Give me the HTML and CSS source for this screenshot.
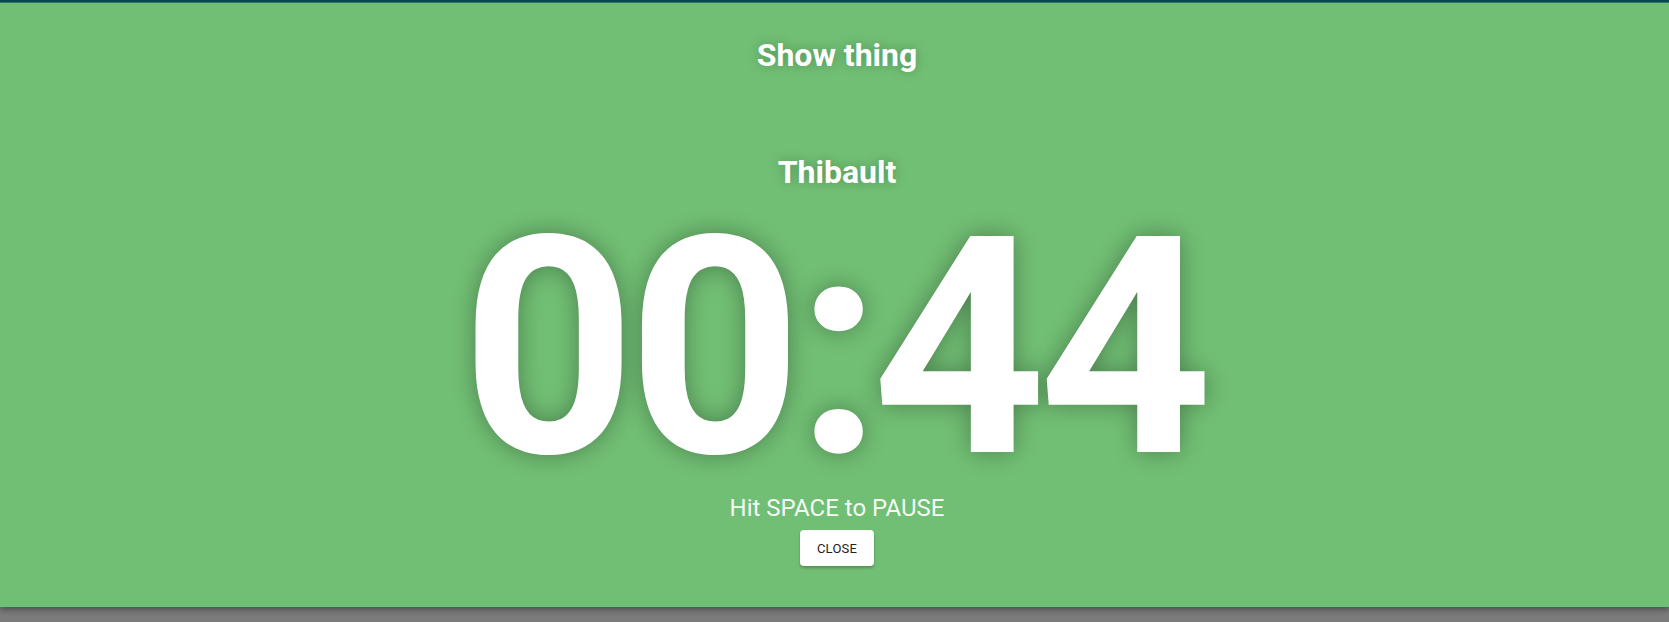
FILE: index.html
```html
<!DOCTYPE html>
<html lang="en">
<head>
<meta charset="utf-8">
<title>Show thing</title>
<link rel="stylesheet" href="styles.css">
</head>
<body>
<div class="topbar"></div>
<main class="panel">
  <div class="content">
    <h1 class="title">Show thing</h1>
    <h2 class="name">Thibault</h2>
    <div class="timer">00<span class="colon">:</span>44</div>
    <p class="hint">Hit SPACE to PAUSE</p>
    <button class="close-btn" type="button">CLOSE</button>
  </div>
</main>
<div class="below"></div>
</body>
</html>
```
FILE: styles.css
```css
html, body {
  margin: 0;
  padding: 0;
}
body {
  background: #7b7b7b;
  font-family: Roboto, "Noto Sans", "Liberation Sans", sans-serif;
  height: 622px;
  overflow: hidden;
}
.topbar {
  height: 3px;
  background: linear-gradient(#0b4656 0, #0b4656 2px, #2d7a72 2px);
}
.panel {
  height: 604px;
  background: #71bf74;
  box-shadow: 0 3px 6px rgba(0,0,0,0.35);
  position: relative;
}
.content {
  display: flex;
  flex-direction: column;
  align-items: center;
  padding-top: 32px;
  padding-left: 5px;
  color: #fff;
}
.title, .name {
  margin: 0;
  font-size: 32px;
  line-height: 40px;
  font-weight: 700;
  text-shadow: 0 0 12px rgba(0,0,0,0.25);
}
.name {
  margin-top: 77px;
}
.timer {
  margin-top: 27px;
  padding-right: 8px;
  font-size: 304px;
  line-height: 258px;
  font-weight: 700;
  letter-spacing: -8px;
  text-shadow: 0 0 24px rgba(0,0,0,0.33);
}
.colon {
  margin-left: 2px;
  margin-right: -2px;
}
.hint {
  margin: 17px 0 0;
  font-size: 24px;
  line-height: 28px;
  font-weight: 400;
  color: rgba(255,255,255,0.95);
}
.close-btn {
  margin-top: 8px;
  height: 36px;
  min-width: 64px;
  padding: 0 17px;
  border: none;
  border-radius: 4px;
  background: #fff;
  color: #222;
  font-family: Roboto, "Noto Sans", sans-serif;
  font-size: 13px;
  font-weight: 400;
  letter-spacing: 0.2px;
  box-shadow: 0 2px 3px rgba(0,0,0,0.25);
}
```
